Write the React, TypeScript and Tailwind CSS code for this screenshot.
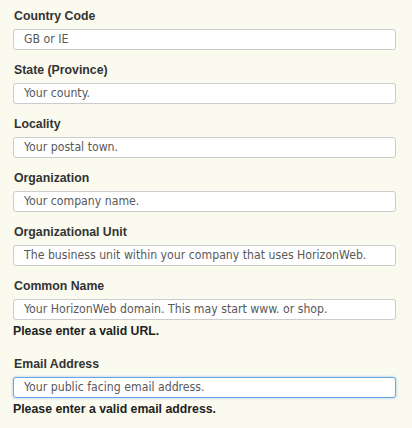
import React from "react";

type Field = { label: string; placeholder: string; error?: string; focus?: boolean };

const fields: Field[] = [
  { label: "Country Code", placeholder: "GB or IE" },
  { label: "State (Province)", placeholder: "Your county." },
  { label: "Locality", placeholder: "Your postal town." },
  { label: "Organization", placeholder: "Your company name." },
  { label: "Organizational Unit", placeholder: "The business unit within your company that uses HorizonWeb." },
  { label: "Common Name", placeholder: "Your HorizonWeb domain. This may start www. or shop.", error: "Please enter a valid URL." },
  { label: "Email Address", placeholder: "Your public facing email address.", error: "Please enter a valid email address.", focus: true },
];

export default function App() {
  return (
    <div className="w-[412px] h-[428px] bg-[#fafaef] pl-[13px] pr-[16px] pt-[8px] overflow-hidden">
      {fields.map((f) => (
        <div key={f.label} className="flex flex-col">
          <label className="pl-[1px] text-[12.3px] leading-[16px] font-bold text-[#333333] font-['Liberation_Sans',Arial,sans-serif]">
            {f.label}
          </label>
          <div
            className={
              "mt-[5px] h-[21px] rounded-[3px] bg-white border flex items-center pl-[10px] " +
              (f.focus ? "border-[#6aa6e6] shadow-[0_0_3px_rgba(100,160,230,0.6)]" : "border-[#cccccc]")
            }
          >
            <span className="text-[12.2px] text-[#595959] font-['DejaVu_Sans_Condensed','DejaVu_Sans',Verdana,sans-serif] whitespace-nowrap">
              {f.placeholder}
            </span>
          </div>
          {f.error ? (
            <div className="mt-[3px] mb-[17px] text-[12.3px] leading-[16px] font-bold text-[#222222] font-['Liberation_Sans',Arial,sans-serif]">
              {f.error}
            </div>
          ) : (
            <div className="h-[12px]" />
          )}
        </div>
      ))}
    </div>
  );
}
